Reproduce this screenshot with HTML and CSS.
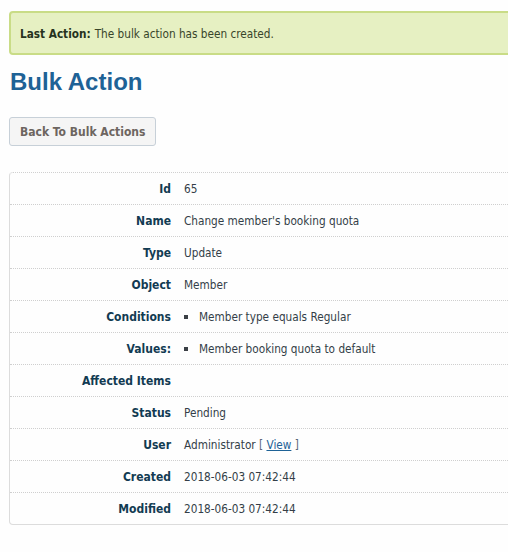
FILE: index.html
```html
<!DOCTYPE html>
<html>
<head>
<meta charset="utf-8">
<link rel="stylesheet" href="styles.css">
</head>
<body>
<div class="page">
  <div class="flash"><strong>Last Action:</strong> The bulk action has been created.</div>
  <h1 class="title">Bulk Action</h1>
  <div class="actions"><button class="btn">Back To Bulk Actions</button></div>
  <div class="details">
    <div class="row"><div class="label">Id</div><div class="value">65</div></div>
    <div class="row"><div class="label">Name</div><div class="value">Change member's booking quota</div></div>
    <div class="row"><div class="label">Type</div><div class="value">Update</div></div>
    <div class="row"><div class="label">Object</div><div class="value">Member</div></div>
    <div class="row"><div class="label">Conditions</div><div class="value"><ul class="list"><li>Member type equals Regular</li></ul></div></div>
    <div class="row"><div class="label">Values:</div><div class="value"><ul class="list"><li>Member booking quota to default</li></ul></div></div>
    <div class="row"><div class="label">Affected Items</div><div class="value"></div></div>
    <div class="row"><div class="label">Status</div><div class="value">Pending</div></div>
    <div class="row"><div class="label">User</div><div class="value">Administrator <span class="br">[</span> <a href="#" class="link">View</a> <span class="br">]</span></div></div>
    <div class="row"><div class="label">Created</div><div class="value">2018-06-03 07:42:44</div></div>
    <div class="row last"><div class="label">Modified</div><div class="value">2018-06-03 07:42:44</div></div>
  </div>
</div>
</body>
</html>
```
FILE: styles.css
```css
html, body {
  margin: 0;
  padding: 0;
  background: #fefefe;
  overflow: hidden;
}
body {
  font-family: "DejaVu Sans Condensed", "DejaVu Sans", sans-serif;
  font-size: 11.7px;
  color: #333d47;
}
.page {
  width: 640px;
  padding: 11px 0 0 9px;
}
.flash {
  box-sizing: border-box;
  height: 44px;
  border: 2px solid #c9dc86;
  border-radius: 4px;
  background: #e6f0c2;
  padding: 1px 0 0 9px;
  display: flex;
  align-items: center;
  color: #38452a;
  font-size: 11.7px;
}
.flash strong {
  color: #26331d;
  margin-right: 4px;
}
.title {
  font-family: "Liberation Sans", Arial, sans-serif;
  font-size: 24px;
  font-weight: bold;
  color: #1e6296;
  margin: 13px 0 0 1px;
  line-height: 28px;
}
.actions {
  margin-top: 21px;
}
.btn {
  font-family: "DejaVu Sans Condensed", "DejaVu Sans", sans-serif;
  font-size: 12px;
  font-weight: bold;
  color: #6d6560;
  background: #f5f5f5;
  border: 1px solid #c7d0d8;
  border-radius: 3px;
  height: 29px;
  padding: 0 10px;
  margin: 0;
}
.details {
  margin-top: 26px;
  border: 1px solid #dcdcdc;
  border-top: 1px dotted #d0d0d0;
  border-radius: 4px;
}
.row {
  display: grid;
  grid-template-columns: 161px 1fr;
  column-gap: 13px;
  height: 31px;
  align-items: center;
  border-bottom: 1px dotted #cfcfcf;
}
.row.last {
  border-bottom: none;
}
.label {
  text-align: right;
  font-weight: bold;
  font-size: 12px;
  color: #123b52;
}
.value {
  color: #343e48;
}
.list {
  list-style: none;
  margin: 0;
  padding: 0;
}
.list li {
  display: flex;
  align-items: center;
}
.list li::before {
  content: "";
  width: 4px;
  height: 4px;
  background: #3a3f45;
  margin: 1px 11px 0 0;
}
.link {
  color: #1e6296;
  text-decoration: underline;
}
.br {
  color: #5a6878;
}
```
